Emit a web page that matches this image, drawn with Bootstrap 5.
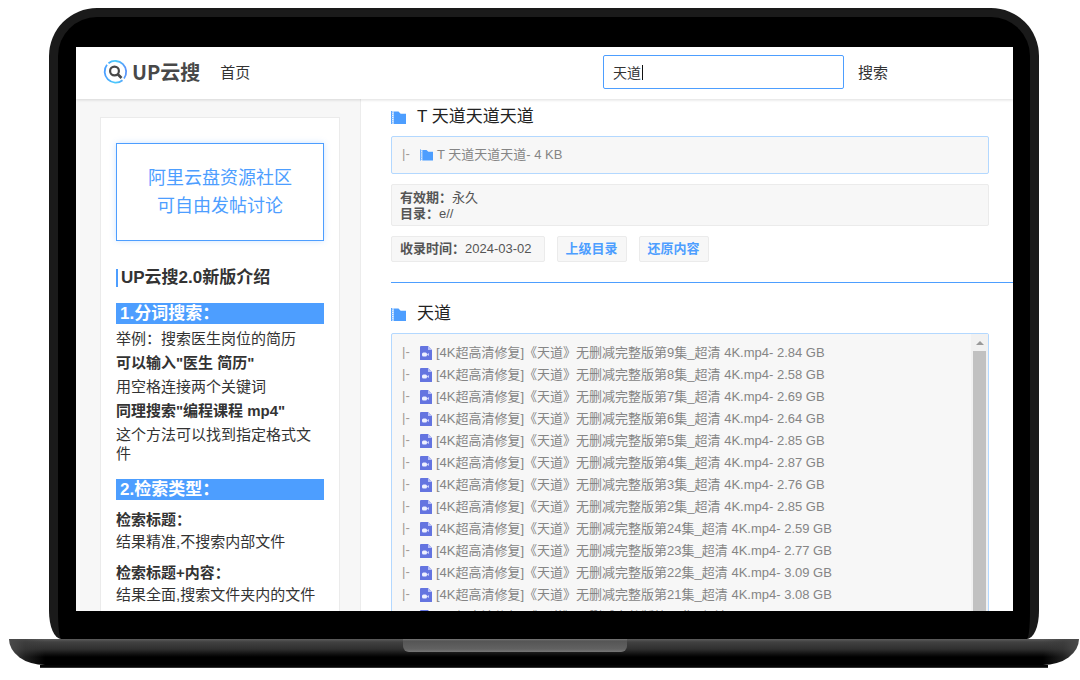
<!DOCTYPE html>
<html lang="zh-CN">
<head>
<meta charset="utf-8">
<meta name="viewport" content="width=device-width, initial-scale=1">
<title>UP云搜</title>
<link href="https://cdn.jsdelivr.net/npm/bootstrap@5.3.0/dist/css/bootstrap.min.css" rel="stylesheet">
<style>
  :root { --brand: #4d9eff; --ui: "Liberation Sans", "Noto Sans CJK SC", sans-serif; }
  body { font-family: var(--ui); font-size: 15px; line-height: 19px; color: #333; background: #fff; }
  a, a:hover { color: inherit; text-decoration: none; }

  /* laptop */
  .laptop { height: 100vh; padding: 8px 0 12px; }
  .lid { margin: 0 41px 0 49px; padding: 30px 17px 28px 18px; background: #000; border: 9px solid #1a1a1a; border-bottom: 0; border-radius: 48px 48px 12px 12px / 48px 48px 28px 28px; min-height: 0; }
  .hinge { margin: 0 1px 0 9px; padding-right: 58px; height: 26px; border-radius: 0 0 36px 36px / 0 0 26px 26px;
    background: linear-gradient(90deg, #4a4a4a 0, #3a3a3a88 16px, transparent 36px, transparent calc(100% - 36px), #3a3a3a88 calc(100% - 16px), #4a4a4a 100%), linear-gradient(#5c5c5c 0, #414141 3px, #303030 10px, #111 15px, #000 18px); }
  .notch { width: 224px; height: 13px; border-radius: 0 0 6px 6px; background: linear-gradient(#777 0, #555 2px, #626262 10px, #777 13px); }
  .foot { margin: 0 32px 0 40px; height: 3px; background: #050505; border-bottom: 1px solid #333; }

  /* site */
  .screen { background: #fff; min-height: 0; }
  .topbar { height: 52px; padding: 0 125px 2px 27px; box-shadow: 0 1px 3px #0002; z-index: 1; }
  .brandname { font: 700 20px/24px "Noto Sans CJK SC", sans-serif; color: #484848; }
  .query { width: 241px; height: 34px; padding: 0 9px; font-size: 14px; color: #333; border: 1px solid var(--brand); border-radius: 2px; box-shadow: none !important; }
  .caret { left: 39px; top: 10px; width: 1px; height: 15px; background: #111; }
  .go { margin-left: 14px; font-size: 15px; line-height: 19px; color: #333; }
  .side { width: 285px; padding: 18px 20px 0 24px; background: #f7f7f7; border-right: 1px solid #ececec; }
  .panel { padding: 25px 15px; background: #fff; border: 1px solid #ebebeb; height: 800px; }
  .promo { padding: 20px 0; margin-bottom: 28px; font-size: 18px; line-height: 28px; color: var(--brand) !important; border: 1px solid var(--brand); box-shadow: 0 0 6px #4d9eff44; }
  .intro { margin: 0 0 16px; padding-left: 3px; border-left: 2px solid var(--brand); font-size: 17px; line-height: 18px; font-weight: 700; }
  .band { margin: 0 0 5px; padding-left: 4px; background: var(--brand); color: #fff; font-size: 17px; line-height: 21px; font-weight: 700; }
  .panel p { margin: 0 0 5px; }
  .pair { margin: 10px 0 12px; }
  .pair p { margin-bottom: 3px; }
  .results { padding: 7px 0 0 30px; font-size: 13px; line-height: 16px; }
  .caption { margin: 0 0 8px; gap: 11px; font-size: 17px; line-height: 22px; font-weight: 400; color: #222; }
  .tile { margin-right: 24px; background: #f7f7f7; border: 1px solid #ebebeb; border-radius: 2px; color: #555; }
  .files { border-color: #b3d8ff; color: #858585; line-height: 22px; }
  .files ul { padding: 7px 10px; }
  #episodes { padding-top: 8px; }
  .tick { width: 18px; color: #a39a94; line-height: 18px; padding-bottom: 2px; }
  .info { margin-top: 10px; margin-bottom: 10px; padding: 5px 8px 3px; }
  .chips { gap: 12px; }
  .chip { margin: 0; padding: 4px 8px; font-size: 13px; line-height: 16px; }
  .date { padding-right: 12px; }
  .act { color: var(--brand); font-weight: 700; }
  .rule { margin: 20px 0 20px; height: 1px; background: var(--brand); }
  .scroller { width: 17px; padding-top: 6px; background: #f1f1f1; gap: 5px; }
  .thumb { width: 13px; background: #c1c1c1; }
</style>
</head>
<body>
<svg class="d-none" aria-hidden="true">
  <symbol id="folder" viewBox="0 0 14 12">
    <path fill="#4d9eff" d="M2.500 .5H7L9 2.500h5V12H2.500z"/>
    <path stroke="#4d9eff" stroke-width="1" d="M.5 0v12"/>
    <path stroke="#8cc0ff" stroke-width="2" stroke-dasharray="1 1" d="M1.500 .5v11.500"/>
  </symbol>
  <symbol id="video" viewBox="0 0 12 14">
    <path fill="#6474e0" d="M1 0h7l4 4v9.500a.5.500 0 0 1-.5.500h-11a.5.500 0 0 1-.5-.5V1a1 1 0 0 1 1-1z"/>
    <path fill="#b9c2fa" d="M8 0l4 4H8z"/>
    <rect x="2" y="6.500" width="5" height="4" rx="1.500" fill="#eef0ff"/>
    <path fill="#c8cefb" d="M6.500 8.500l2.500-1.500v3z"/>
  </symbol>
</svg>

<div class="laptop d-flex flex-column overflow-hidden">
  <div class="lid d-flex flex-column flex-grow-1">
    <div class="screen d-flex flex-column flex-grow-1 overflow-hidden">
      <header class="topbar d-flex align-items-center flex-shrink-0 position-relative">
        <a href="#" class="d-flex align-items-center">
          <svg width="25" height="26" viewBox="0 0 25 26" fill="none" aria-hidden="true">
            <defs><linearGradient id="ring" x1="0" y1="0" x2="1" y2="0"><stop offset="0" stop-color="#4a9dff"/><stop offset=".5" stop-color="#49cdfb"/><stop offset="1" stop-color="#5a93fa"/></linearGradient></defs>
            <path stroke="url(#ring)" stroke-width="1.800" d="M5.500 4.200A11 11 0 0 1 21 19.500M19.500 21.200A11 11 0 0 1 4 5.800"/>
            <circle cx="11.500" cy="12" r="4.400" stroke="#484848" stroke-width="2.200"/>
            <path stroke="#484848" stroke-width="2.600" d="M14.500 15l4 4"/>
          </svg>
          <span class="brandname ms-1">UP云搜</span>
        </a>
        <nav class="ms-3 ps-1"><a href="#">首页</a></nav>
        <form class="d-flex align-items-center ms-auto" onsubmit="return false">
          <div class="position-relative">
            <input class="query form-control" type="text" value="天道" aria-label="搜索">
            <span class="caret position-absolute"></span>
          </div>
          <button class="go btn border-0 p-0" type="submit">搜索</button>
        </form>
      </header>

      <div class="d-flex flex-grow-1 overflow-hidden">
        <aside class="side flex-shrink-0">
          <div class="panel">
            <a href="#" class="promo d-block text-center">阿里云盘资源社区<br>可自由发帖讨论</a>
            <h2 class="intro">UP云搜2.0新版介绍</h2>
            <h3 class="band">1.分词搜索：</h3>
            <p>举例：搜索医生岗位的简历</p>
            <p class="fw-bold">可以输入"医生 简历"</p>
            <p>用空格连接两个关键词</p>
            <p class="fw-bold">同理搜索"编程课程 mp4"</p>
            <p>这个方法可以找到指定格式文件</p>
            <h3 class="band mt-3">2.检索类型：</h3>
            <div class="pair"><p class="fw-bold">检索标题：</p><p>结果精准,不搜索内部文件</p></div>
            <div class="pair"><p class="fw-bold">检索标题+内容：</p><p>结果全面,搜索文件夹内的文件</p></div>
          </div>
        </aside>

        <main class="results flex-grow-1">
          <h2 class="caption d-flex align-items-center"><svg width="15" height="13" aria-hidden="true"><use href="#folder"/></svg>T 天道天道天道</h2>
          <div class="tile files">
            <ul class="list-unstyled m-0">
              <li class="d-flex align-items-center"><span class="tick">|-</span><svg class="me-1" width="13" height="12" aria-hidden="true"><use href="#folder"/></svg>T 天道天道天道- 4 KB</li>
            </ul>
          </div>
          <div class="tile info"><strong>有效期：</strong>永久<br><strong>目录：</strong>e//</div>
          <div class="chips d-flex">
            <div class="tile chip date"><strong>收录时间：</strong>2024-03-02</div>
            <button class="tile chip act" type="button">上级目录</button>
            <button class="tile chip act" type="button">还原内容</button>
          </div>
          <div class="rule"></div>
          <h2 class="caption d-flex align-items-center"><svg width="15" height="13" aria-hidden="true"><use href="#folder"/></svg>天道</h2>
          <div class="tile files d-flex">
            <ul class="list-unstyled m-0 flex-grow-1" id="episodes"></ul>
            <div class="scroller d-flex flex-column align-items-center">
              <svg class="flex-shrink-0" width="8" height="6" aria-hidden="true"><path d="M0 5l4-4 4 4z" fill="#999"/></svg>
              <div class="thumb flex-grow-1"></div>
            </div>
          </div>
        </main>
      </div>
    </div>
  </div>
  <div class="hinge d-flex justify-content-center flex-shrink-0"><div class="notch"></div></div>
  <div class="foot flex-shrink-0"></div>
</div>

<script>
  const episodes = [[9,"2.84"],[8,"2.58"],[7,"2.69"],[6,"2.64"],[5,"2.85"],[4,"2.87"],[3,"2.76"],[2,"2.85"],[24,"2.59"],[23,"2.77"],[22,"3.09"],[21,"3.08"],[20,"2.80"]];
  document.getElementById("episodes").innerHTML = episodes.map(([n, size]) =>
    `<li class="d-flex align-items-center"><span class="tick">|-</span><svg class="me-1" width="12" height="14" aria-hidden="true"><use href="#video"/></svg>[4K超高清修复]《天道》无删减完整版第${n}集_超清 4K.mp4- ${size} GB</li>`).join("");
</script>
<script src="https://cdn.jsdelivr.net/npm/bootstrap@5.3.0/dist/js/bootstrap.bundle.min.js"></script>
</body>
</html>
